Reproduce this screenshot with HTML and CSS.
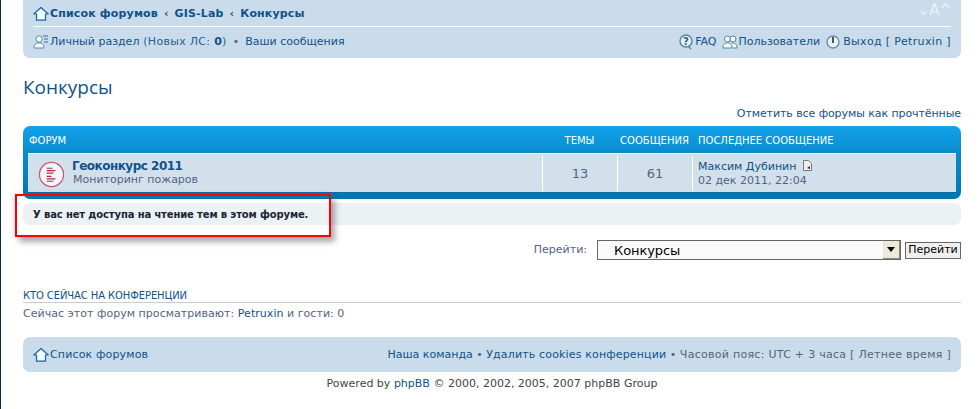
FILE: index.html
```html
<!DOCTYPE html>
<html lang="ru">
<head>
<meta charset="utf-8">
<title>Конкурсы</title>
<link rel="stylesheet" href="styles.css">
</head>
<body>
<div class="page">
  <div class="navbar">
    <div class="nav-row nav-top">
      <div class="crumbs">
        <svg class="ico" viewBox="0 0 16 16"><path d="M.8 8 8 1.500 15.200 8h-2.700v6.200h-9V8z" fill="#f4f9fc" stroke="#11679f" stroke-width="1.200" stroke-linejoin="round"/></svg>
        <a>Список форумов</a><span class="sep">‹</span><a>GIS-Lab</a><span class="sep">‹</span><a>Конкурсы</a>
      </div>
      <div class="fontsize">⌄A^</div>
    </div>
    <div class="nav-row nav-bottom">
      <div class="nav-left">
        <svg class="ico" viewBox="0 0 16 16"><circle cx="6" cy="5" r="3.200" fill="#fff" stroke="#4d86ad"/><path d="M1 14c0-4 2-5 5-5s5 1 5 5z" fill="#fff" stroke="#4d86ad"/><path d="M10 2h5M11 5h4M11 8h4" stroke="#3d6f93"/></svg>
        <a>Личный раздел</a><span class="unread">&nbsp;(Новых ЛС: <b>0</b>)</span><span class="dot">•</span><a>Ваши сообщения</a>
      </div>
      <div class="nav-right">
        <svg class="ico" viewBox="0 0 16 16"><circle cx="8" cy="7" r="6" fill="#e8f1f7" stroke="#4d86ad" stroke-width="1.400"/><path d="M10 12l3 3" stroke="#4d86ad" stroke-width="1.600"/><text x="8" y="10.500" class="qmark">?</text></svg>
        <a>FAQ</a>
        <svg class="ico ico-gap" viewBox="0 0 16 16"><circle cx="5.500" cy="5" r="3" fill="#fff" stroke="#4d86ad"/><circle cx="11" cy="5" r="3" fill="#fff" stroke="#4d86ad"/><path d="M1 14c0-4 2-5 4.500-5s4.500 1 4.500 5zM10 9c3 0 5 1 5 5h-4" fill="#fff" stroke="#4d86ad"/></svg>
        <a>Пользователи</a>
        <svg class="ico ico-gap" viewBox="0 0 16 16"><circle cx="8" cy="8" r="6" fill="#e8f1f7" stroke="#6f8ea5" stroke-width="1.400"/><path d="M8 3v6" stroke="#4a5560" stroke-width="2"/></svg>
        <a class="logout">Выход [ Petruxin ]</a>
      </div>
    </div>
  </div>

  <h2 class="title">Конкурсы</h2>
  <div class="mark"><a>Отметить все форумы как прочтённые</a></div>

  <div class="forabg">
    <div class="head">
      <div class="c-main">ФОРУМ</div>
      <div class="c-num">ТЕМЫ</div>
      <div class="c-num">СООБЩЕНИЯ</div>
      <div class="c-last">ПОСЛЕДНЕЕ СООБЩЕНИЕ</div>
    </div>
    <div class="row">
      <div class="c-main forum">
        <svg class="forum-ico" viewBox="0 0 28 28"><circle cx="14" cy="14" r="12.500" fill="#f3f6f9" stroke="#c9566f" stroke-width="1.300"/><path d="M9 7.500h6M9 10h9M9 12.500h7M9 16h5M9 18.500h9M9 21h7" stroke="#b52a4a" stroke-width="1.200"/></svg>
        <div class="forum-text">
          <a class="forum-name">Геоконкурс 2011</a>
          <div class="forum-desc">Мониторинг пожаров</div>
        </div>
      </div>
      <div class="c-num cell">13</div>
      <div class="c-num cell">61</div>
      <div class="c-last cell lastpost">
        <div><a>Максим Дубинин</a> <svg class="post-ico" viewBox="0 0 11 11"><path d="M1.500.5h5l3 3v7h-8z" fill="#eee" stroke="#777"/><path d="M5 8l3-2v3z" fill="#333"/></svg></div>
        <div>02 дек 2011, 22:04</div>
      </div>
    </div>
  </div>

  <div class="notice">
    <strong>У вас нет доступа на чтение тем в этом форуме.</strong>
    <div class="callout"></div>
  </div>

  <div class="jump">
    <label class="jump-label">Перейти:</label>
    <div class="select"><span>Конкурсы</span><span class="arrow"><i></i></span></div>
    <button class="go" type="button">Перейти</button>
  </div>

  <h3 class="who-head">КТО СЕЙЧАС НА КОНФЕРЕНЦИИ</h3>
  <p class="who">Сейчас этот форум просматривают: <a>Petruxin</a> и гости: 0</p>

  <div class="foot">
    <div class="foot-left">
      <svg class="ico" viewBox="0 0 16 16"><path d="M.8 8 8 1.500 15.200 8h-2.700v6.200h-9V8z" fill="#f4f9fc" stroke="#11679f" stroke-width="1.200" stroke-linejoin="round"/></svg>
      <a>Список форумов</a>
    </div>
    <div class="foot-right"><a>Наша команда</a> • <a class="cookies">Удалить cookies конференции</a> • <span class="tz">Часовой пояс: UTC + 3 часа [ Летнее время ]</span></div>
  </div>
  <div class="copy">Powered by <a>phpBB</a> © 2000, 2002, 2005, 2007 phpBB Group</div>
</div>
</body>
</html>
```

FILE: styles.css
```css
* { box-sizing: border-box; }
html, body { margin: 0; height: 100%; background: #fff; }
body { font: 11px/14px "DejaVu Sans", Verdana, sans-serif; color: #536482; overflow: hidden; }
a { color: #105289; }
.page { width: 961px; height: 409px; border-left: 1px solid #0f2a47; padding-left: 22px; }

.navbar { height: 58px; background: #cadceb; border-radius: 0 0 7px 7px; padding: 0 10px; }
.nav-row { display: flex; justify-content: space-between; align-items: center; }
.nav-top { height: 27px; border-bottom: 1px solid #fff; }
.nav-bottom { height: 29px; }
.crumbs { display: flex; align-items: center; font-weight: bold; padding-top: 1px; letter-spacing: .15px; }
.sep { margin: 0 6px; color: #105289; }
.ico { width: 16px; height: 16px; flex: none; margin-right: 1px; }
.ico-gap { margin-left: 5px; }
.qmark { font: bold 10px "DejaVu Sans", sans-serif; fill: #2f5f80; text-anchor: middle; }
.crumbs .ico { margin-right: 1px; }
.fontsize { color: #eaf2f8; font-size: 15px; letter-spacing: -.5px; padding-bottom: 7px; }
.nav-left, .nav-right { display: flex; align-items: center; white-space: pre; }
.unread { color: #2a5d8a; letter-spacing: .3px; }
.unread b { color: #105289; }
.dot { margin: 0 6px; }
.logout { margin-left: 1px; letter-spacing: .35px; }

.title { margin: 0; padding-top: 17px; height: 47px; font: normal 19px/24px "Open Sans", sans-serif; color: #105289; }
.mark { height: 21px; padding-top: 2px; text-align: right; letter-spacing: -.08px; }

.forabg { height: 73px; background: linear-gradient(#12a3eb 0, #0a8ccf 25px, #0076b1 100%); border-radius: 7px; padding: 5px 5px 6px; }
.head, .row { display: grid; grid-template-columns: 514px 75px 75px 1fr; }
.head { height: 22px; color: #fff; font-size: 10px; line-height: 16px; align-items: center; padding-bottom: 2px; }
.head .c-main { padding-left: 1px; }
.head .c-last { padding-left: 6px; }
.row { height: 40px; background: #d2e0eb; border-top: 1px solid #fff; border-bottom: 1px solid #0a6ea3; }
.c-num { text-align: center; }
.cell { border-left: 1px solid #fff; margin: 2px 0 3px; }
.c-num.cell { font-size: 13px; line-height: 35px; }
.forum { display: flex; align-items: center; padding-left: 10px; gap: 7px; }
.forum-ico { width: 27px; height: 27px; }
.forum-text { padding-bottom: 4px; }
.forum-name { display: block; font: bold 12px/14px "DejaVu Sans", sans-serif; letter-spacing: -.5px; }
.forum-desc { line-height: 13px; padding-left: 1px; }
.lastpost { padding: 4px 0 0 5px; line-height: 14px; }
.post-ico { width: 11px; height: 11px; vertical-align: -1px; margin-left: 2px; }

.notice { position: relative; height: 22px; margin-top: 4px; background: #ecf1f3; border-radius: 7px; padding: 5px 10px; color: #1a2433; font-size: 10px; letter-spacing: -.13px; }
.callout { position: absolute; left: -8px; top: -9px; width: 316px; height: 43px; border: 2px solid #f00; box-shadow: 4px 5px 6px rgba(60, 70, 80, .45), -2px -1px 4px rgba(60, 70, 80, .15); }

.jump { display: flex; align-items: center; justify-content: flex-end; height: 20px; margin-top: 15px; }
.jump-label { margin-right: 10px; }
.select { width: 304px; height: 20px; border: 1px solid #666; background: #fafafa; color: #000; font-size: 13px; line-height: 19px; padding-left: 16px; display: flex; justify-content: space-between; letter-spacing: -.1px; }
.arrow { width: 17px; height: 18px; background: #ece9d8; border-right: 1px solid #888; border-bottom: 1px solid #888; display: flex; align-items: center; justify-content: center; }
.arrow i { border: 4px solid transparent; border-top: 5px solid #000; border-bottom: 0; }
.go { width: 56px; height: 17px; margin-left: 4px; padding: 0; border: 1px solid #666; background: #efefef; color: #000; font: 11px/14px "DejaVu Sans", sans-serif; }

.who-head { margin: 28px 0 0; height: 15px; border-bottom: 1px solid #ccc; font: normal 10px/15px "DejaVu Sans", sans-serif; letter-spacing: -.1px; color: #105289; }
.who { margin: 4px 0 0; height: 14px; letter-spacing: .04px; }

.foot { display: flex; justify-content: space-between; align-items: center; height: 35px; margin-top: 16px; padding: 0 10px; background: #cadceb; border-radius: 7px; }
.foot-left { display: flex; align-items: center; letter-spacing: .15px; }
.foot-left .ico { margin-right: 1px; }
.foot-right { white-space: pre; }
.cookies { letter-spacing: .15px; }
.tz { letter-spacing: .28px; }
.copy { text-align: center; color: #444; margin-top: 5px; }
```
